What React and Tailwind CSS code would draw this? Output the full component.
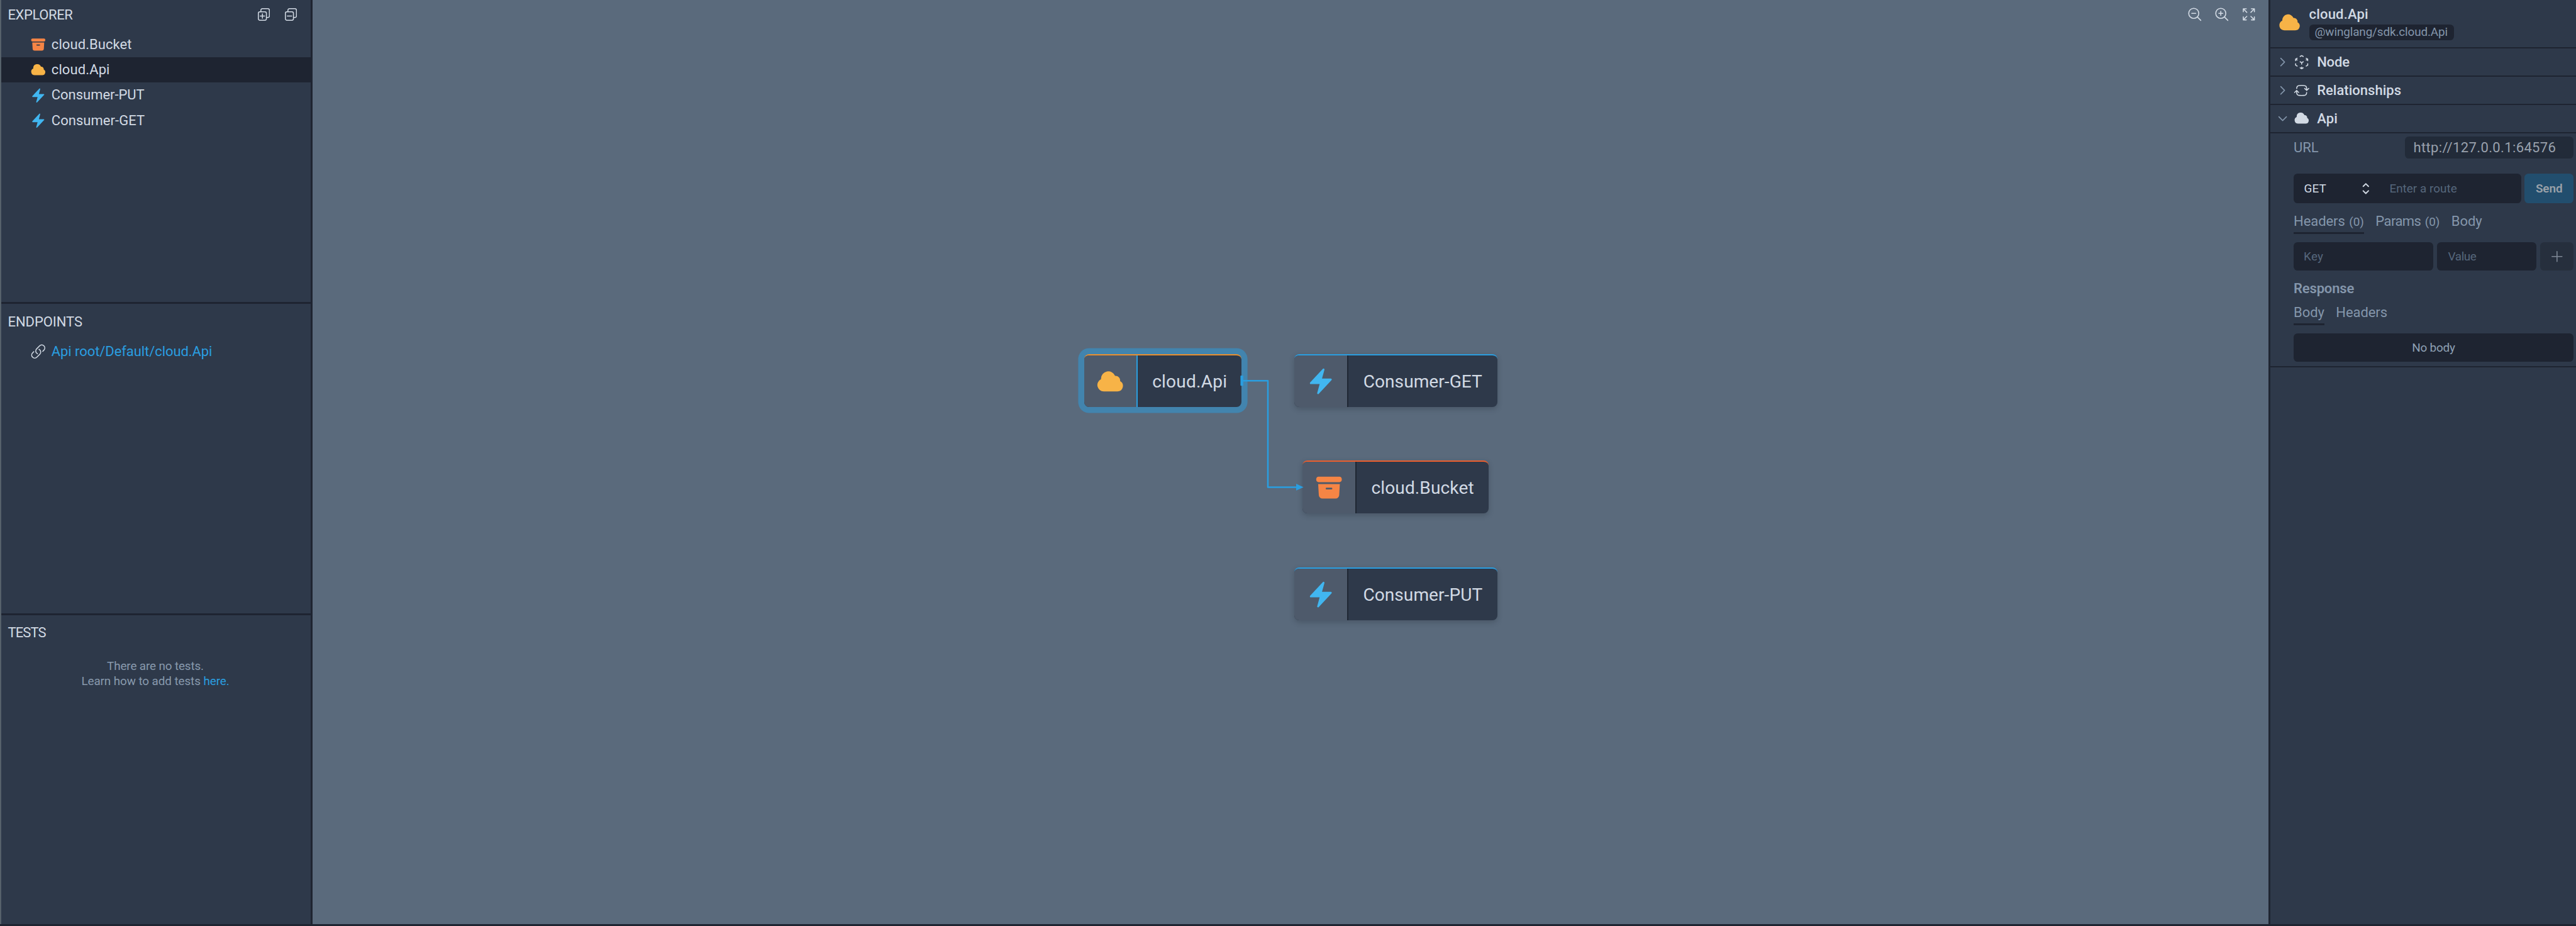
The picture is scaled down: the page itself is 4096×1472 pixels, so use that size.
import React from "react";
import {
  HiArchiveBox,
  HiBolt,
  HiCloud,
  HiMiniChevronUpDown,
  HiOutlineArrowPathRoundedSquare,
  HiOutlineArrowsPointingOut,
  HiOutlineChevronDown,
  HiOutlineChevronRight,
  HiOutlineCubeTransparent,
  HiOutlineLink,
  HiOutlineMagnifyingGlassMinus,
  HiOutlineMagnifyingGlassPlus,
  HiOutlinePlus,
} from "react-icons/hi2";

function StackedSquares({ plus }) {
  return (
    <svg
      viewBox="0 0 24 25"
      fill="none"
      stroke="currentColor"
      strokeWidth="1.9"
      strokeLinecap="round"
      strokeLinejoin="round"
      className="h-[20px] w-[19.2px]"
    >
      <rect x="1" y="7.3" width="16" height="16.7" rx="3" />
      <path d="M6 7V4a3 3 0 0 1 3-3H20a3 3 0 0 1 3 3V15.500a3 3 0 0 1-3 3H17.500" />
      <path d={plus ? "M4.700 15.700H13.500M9.100 11.300V20.100" : "M4.700 15.700H13.500"} />
    </svg>
  );
}

function TreeRow({ icon: Icon, iconClass, label, labelClass, selected }) {
  return (
    <div
      className={
        "flex h-[40.4px] items-center gap-[8.2px] pl-[46px] text-[22px] leading-[40px] " +
        (selected ? "bg-[#1e2431]" : "")
      }
    >
      <Icon className={"h-[25.6px] w-[25.6px] " + iconClass} />
      <span className={"whitespace-nowrap " + labelClass}>{label}</span>
    </div>
  );
}

function Explorer() {
  return (
    <section className="h-[480px]">
      <div className="flex h-[46px] items-center justify-between pl-[10.500px] pr-[22px]">
        <h2 className="text-[22px] tracking-[-0.39px]">EXPLORER</h2>
        <div className="flex gap-[24px]">
          <StackedSquares plus />
          <StackedSquares />
        </div>
      </div>
      <div className="pt-[4.4px]">
        <TreeRow icon={HiArchiveBox} iconClass="text-[#f68545]" label="cloud.Bucket" labelClass="tracking-[0.08px]" />
        <TreeRow icon={HiCloud} iconClass="text-[#f7b347]" label="cloud.Api" labelClass="tracking-[0.11px]" selected />
        <TreeRow icon={HiBolt} iconClass="text-[#41b6f0]" label="Consumer-PUT" labelClass="tracking-[-0.03px]" />
        <TreeRow icon={HiBolt} iconClass="text-[#41b6f0]" label="Consumer-GET" labelClass="tracking-[0.05px]" />
      </div>
    </section>
  );
}

function Endpoints() {
  return (
    <section className="h-[492px]">
      <h2 className="h-[55.700px] pl-[10.500px] text-[22px] leading-[57.600px] tracking-[-0.07px]">ENDPOINTS</h2>
      <TreeRow
        icon={HiOutlineLink}
        iconClass=""
        label="Api root/Default/cloud.Api"
        labelClass="tracking-[-0.07px] text-[#2a9ee0]"
      />
    </section>
  );
}

function Tests() {
  return (
    <section className="flex-1">
      <h2 className="h-[68.500px] pl-[10.500px] text-[22px] leading-[55px] tracking-[-0.9px]">TESTS</h2>
      <div className="pr-[2px] text-center text-[18.9px] leading-[24px] text-[#8899ad]">
        <p className="tracking-[-0.14px]">There are no tests.</p>
        <p className="tracking-[-0.1px]">
          Learn how to add tests <a className="text-[#2a9ee0]">here.</a>
        </p>
      </div>
    </section>
  );
}

function Node({ icon: Icon, place, iconClass, dividerClass, label, labelClass }) {
  return (
    <div
      className={
        "absolute flex h-[84px] overflow-hidden rounded-[8px] border-t-[2px] bg-[#2e394a] " + place
      }
    >
      <div className={"flex w-[85.600px] shrink-0 items-center justify-center border-r-[2px] bg-[#4e5a6b] " + dividerClass}>
        <Icon className={"h-[46.4px] w-[46.4px] " + iconClass} />
      </div>
      <div className="flex flex-1 items-center justify-center pt-[2px] text-[28.1px]">
        <span className={"whitespace-nowrap " + labelClass}>{label}</span>
      </div>
    </div>
  );
}

function Canvas() {
  return (
    <main className="relative w-[3110px] shrink-0 overflow-hidden bg-[#5a6a7c]">
      <Node
        icon={HiCloud}
        place="left-[1226.6px] top-[563px] w-[250.6px] border-[#ea8f2e] shadow-[0_0_0_9.6px_rgba(42,158,224,0.5)]"
        iconClass="text-[#f7b347]"
        dividerClass="border-[#2a9ee0]"
        label="cloud.Api"
        labelClass="tracking-[0.2px]"
      />
      <Node
        icon={HiBolt}
        place="left-[1561px] top-[563px] w-[323px] border-[#2a9ee0] shadow-[0_3px_8px_rgba(30,36,48,0.28)]"
        iconClass="text-[#41b6f0]"
        dividerClass="border-[#1f2733]"
        label="Consumer-GET"
        labelClass="tracking-[0.04px]"
      />
      <Node
        icon={HiArchiveBox}
        place="left-[1574.3px] top-[732px] w-[296px] border-[#ee5f2d] shadow-[0_3px_8px_rgba(30,36,48,0.28)]"
        iconClass="text-[#f68545]"
        dividerClass="border-[#1f2733]"
        label="cloud.Bucket"
        labelClass="tracking-[0.1px]"
      />
      <Node
        icon={HiBolt}
        place="left-[1561px] top-[902px] w-[323px] border-[#2a9ee0] shadow-[0_3px_8px_rgba(30,36,48,0.28)]"
        iconClass="text-[#41b6f0]"
        dividerClass="border-[#1f2733]"
        label="Consumer-PUT"
        labelClass="tracking-[0.04px]"
      />
      <svg viewBox="0 0 110 200" className="absolute left-[1470px] top-[590px] h-[200px] w-[110px]">
        <rect x="5.4" y="7" width="4.4" height="16.300" rx="1" fill="#2a9ee0" />
        <path d="M9 15.200H49V184.400H95" fill="none" stroke="#2a9ee0" strokeWidth="2.5" strokeLinejoin="round" />
        <path d="M94 179L105.600 184.400L94 189.800Z" fill="#2a9ee0" />
      </svg>
      <div className="absolute right-[18.500px] top-[9.9px] flex gap-[17.2px] text-[25.6px] text-[#d2dae4]">
        <HiOutlineMagnifyingGlassMinus />
        <HiOutlineMagnifyingGlassPlus />
        <HiOutlineArrowsPointingOut />
      </div>
    </main>
  );
}

function SectionHeader({ open, icon: Icon, label, labelClass }) {
  const Chevron = open ? HiOutlineChevronDown : HiOutlineChevronRight;
  return (
    <div className="flex h-[44.9px] items-center border-b-[2px] border-[#1e2431] pl-[9.5px]">
      <Chevron className="h-[19.2px] w-[19.2px] stroke-[2] text-[#8496ab]" />
      <Icon className="ml-[7.9px] h-[25.6px] w-[25.6px]" />
      <span className={"ml-[12px] text-[22px] font-medium " + labelClass}>{label}</span>
    </div>
  );
}

function Tab({ active, label, labelClass, count }) {
  return (
    <div
      className={
        "flex h-[36px] items-baseline border-b-[3px] text-[22px] leading-[32.800px] " +
        (active ? "border-[#1e2431]" : "border-transparent")
      }
    >
      <span className={labelClass}>{label}</span>
      {count && <span className="ml-[6.400px] text-[18.9px]">{count}</span>}
    </div>
  );
}

function ApiPanel() {
  return (
    <div className="border-b-[2px] border-[#1e2431] pb-[6.700px] pl-[37px] pr-[4px] pt-[5.500px] text-[#8496ab]">
      <div className="flex h-[34.5px] items-center justify-between text-[22px]">
        <span className="tracking-[-0.06px]">URL</span>
        <div className="flex h-full w-[268.500px] items-center rounded-[6.4px] bg-[#222b39] pl-[14px] tracking-[0.37px] text-[#99a1ad]">
          http://127.0.0.1:64576
        </div>
      </div>

      <div className="mt-[24.800px] flex h-[46.5px] gap-[5.700px] text-[18.9px]">
        <div className="flex flex-1 items-center rounded-[6.4px] bg-[#1e2431] pl-[16.500px]">
          <span className="w-[85px] tracking-[0.06px] text-[#d2dae4]">GET</span>
          <HiMiniChevronUpDown className="h-[25.6px] w-[25.6px] text-[#d2dae4]" />
          <span className="ml-[25.300px] tracking-[0.02px] text-[#56677c]">Enter a route</span>
        </div>
        <div className="flex w-[77.700px] items-center justify-center rounded-[6.4px] bg-[#224e6e] font-semibold tracking-[-0.08px] text-[#9aa1a9]">
          Send
        </div>
      </div>

      <div className="mt-[13px] flex gap-[18.400px]">
        <Tab active label="Headers" labelClass="tracking-[-0.06px]" count="(0)" />
        <Tab label="Params" labelClass="tracking-[-0.54px]" count="(0)" />
        <Tab label="Body" labelClass="tracking-[-0.05px]" />
      </div>

      <div className="mt-[12.800px] flex h-[45.600px] gap-[6.400px] text-[18.9px] leading-[45.600px] text-[#56677c]">
        <div className="w-[222px] rounded-[6.4px] bg-[#1e2431] pl-[16px] tracking-[0.29px]">Key</div>
        <div className="flex-1 rounded-[6.4px] bg-[#1e2431] pl-[17.200px] tracking-[-0.4px]">Value</div>
        <div className="flex w-[53px] items-center justify-center rounded-[6.4px] bg-[#262f3d] text-[25.600px] text-[#7e8896]">
          <HiOutlinePlus />
        </div>
      </div>

      <div className="mt-[12.600px] h-[32px] text-[22px] font-semibold leading-[32px] tracking-[-0.16px]">Response</div>

      <div className="mt-[6px] flex gap-[18.400px]">
        <Tab active label="Body" labelClass="tracking-[-0.05px]" />
        <Tab label="Headers" labelClass="tracking-[-0.06px]" />
      </div>

      <div className="mt-[12.800px] h-[45.700px] rounded-[6.4px] bg-[#1e2431] text-center text-[18.9px] leading-[45.700px] tracking-[-0.2px] text-[#8ea0b4]">
        No body
      </div>
    </div>
  );
}

function Inspector() {
  return (
    <aside className="min-w-0 flex-1 border-l-[3px] border-[#1e2431] bg-[#2e394a]">
      <div className="flex h-[77px] border-b-[2px] border-[#1e2431] pl-[12px]">
        <HiCloud className="mt-[17px] h-[37px] w-[37px] text-[#f7b347]" />
        <div className="ml-[12.500px] pt-[7px]">
          <div className="h-[31.500px] text-[22px] font-medium leading-[31.500px] tracking-[0.19px]">cloud.Api</div>
          <div className="flex h-[25px] w-[230px] items-center rounded-[6.4px] bg-[#1e2431] pl-[9px] text-[18.9px] tracking-[-0.12px] text-[#8496ab]">
            @winglang/sdk.cloud.Api
          </div>
        </div>
      </div>
      <SectionHeader icon={HiOutlineCubeTransparent} label="Node" labelClass="tracking-[-0.16px]" />
      <SectionHeader icon={HiOutlineArrowPathRoundedSquare} label="Relationships" labelClass="tracking-[0.02px]" />
      <SectionHeader open icon={HiCloud} label="Api" labelClass="tracking-[0.12px]" />
      <ApiPanel />
    </aside>
  );
}

export default function App() {
  return (
    <div className="flex h-[1472px] w-[4096px] flex-col overflow-hidden bg-[#1e2431] font-['Roboto',sans-serif] text-[#d2dae4]">
      <div className="flex h-[1469px]">
        <div className="w-[2px] shrink-0 bg-[#56616b]" />
        <aside className="flex w-[495px] shrink-0 flex-col border-r-[3px] border-[#1e2431] bg-[#2e394a]">
          <Explorer />
          <div className="h-[3px] shrink-0 bg-[#1e2431]" />
          <Endpoints />
          <div className="h-[3px] shrink-0 bg-[#1e2431]" />
          <Tests />
        </aside>
        <Canvas />
        <Inspector />
      </div>
    </div>
  );
}
